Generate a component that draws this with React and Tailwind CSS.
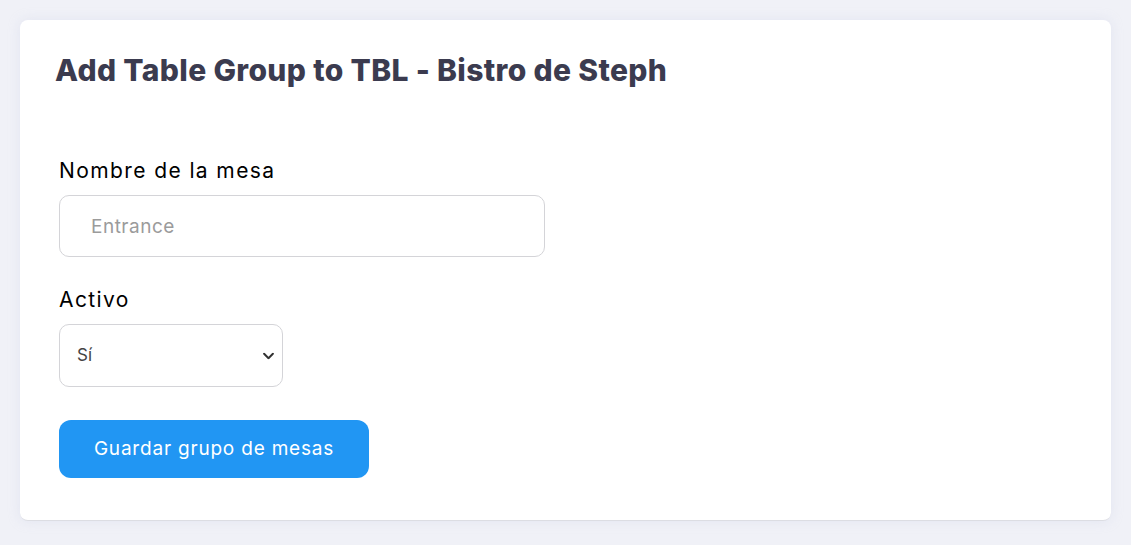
import React from "react";

const font = { fontFamily: "Inter, 'Noto Sans', sans-serif" };

function App() {
    return (
        <div className="min-h-screen bg-[#f0f1f7] p-5" style={font}>
            <div className="rounded-lg border-b border-[#dcdde3] bg-white px-[35px] pt-[30px] pb-[42px] shadow-[0_0_12px_rgba(200,205,230,0.35)]">
                <h2 className="text-[30px] font-extrabold leading-10 tracking-[0.35px] text-[#3b3b4f]">
                    Add Table Group to TBL - Bistro de Steph
                </h2>

                <form className="mt-[66px] px-1" onSubmit={(e) => e.preventDefault()}>
                    <div>
                        <label className="block text-[21px] leading-[30px] tracking-[1.4px] text-black">Nombre de la mesa</label>
                        <input
                            className="mt-[9px] h-[62px] w-[486px] rounded-[10px] border border-[#d4d4d8] px-[31px] text-[19px] tracking-[0.5px] text-[#333] placeholder:text-[#9b9b9b] focus:outline-none"
                            placeholder="Entrance"
                        />
                    </div>

                    <div className="mt-[28px]">
                        <label className="block text-[21px] leading-[30px] tracking-[1.4px] text-black">Activo</label>
                        <div className="relative mt-[9px] w-[224px]">
                            <select className="h-[63px] w-full appearance-none rounded-[10px] border border-[#d4d4d8] bg-white pl-[17px] text-[17px] text-[#444] focus:outline-none">
                                <option>Sí</option>
                                <option>No</option>
                            </select>
                            <svg
                                className="pointer-events-none absolute right-[9px] top-1/2 -translate-y-1/2"
                                width="11"
                                height="7"
                                viewBox="0 0 10 6"
                                fill="none"
                                stroke="#333"
                                strokeWidth="1.8"
                                strokeLinecap="round"
                                strokeLinejoin="round"
                            >
                                <path d="M1 1l4 4 4-4" />
                            </svg>
                        </div>
                    </div>

                    <button
                        type="submit"
                        className="mt-[33px] h-[58px] w-[310px] rounded-xl bg-[#2196f3] text-[19px] tracking-[0.8px] text-white"
                    >
                        Guardar grupo de mesas
                    </button>
                </form>
            </div>
        </div>
    );
}

export default App;
